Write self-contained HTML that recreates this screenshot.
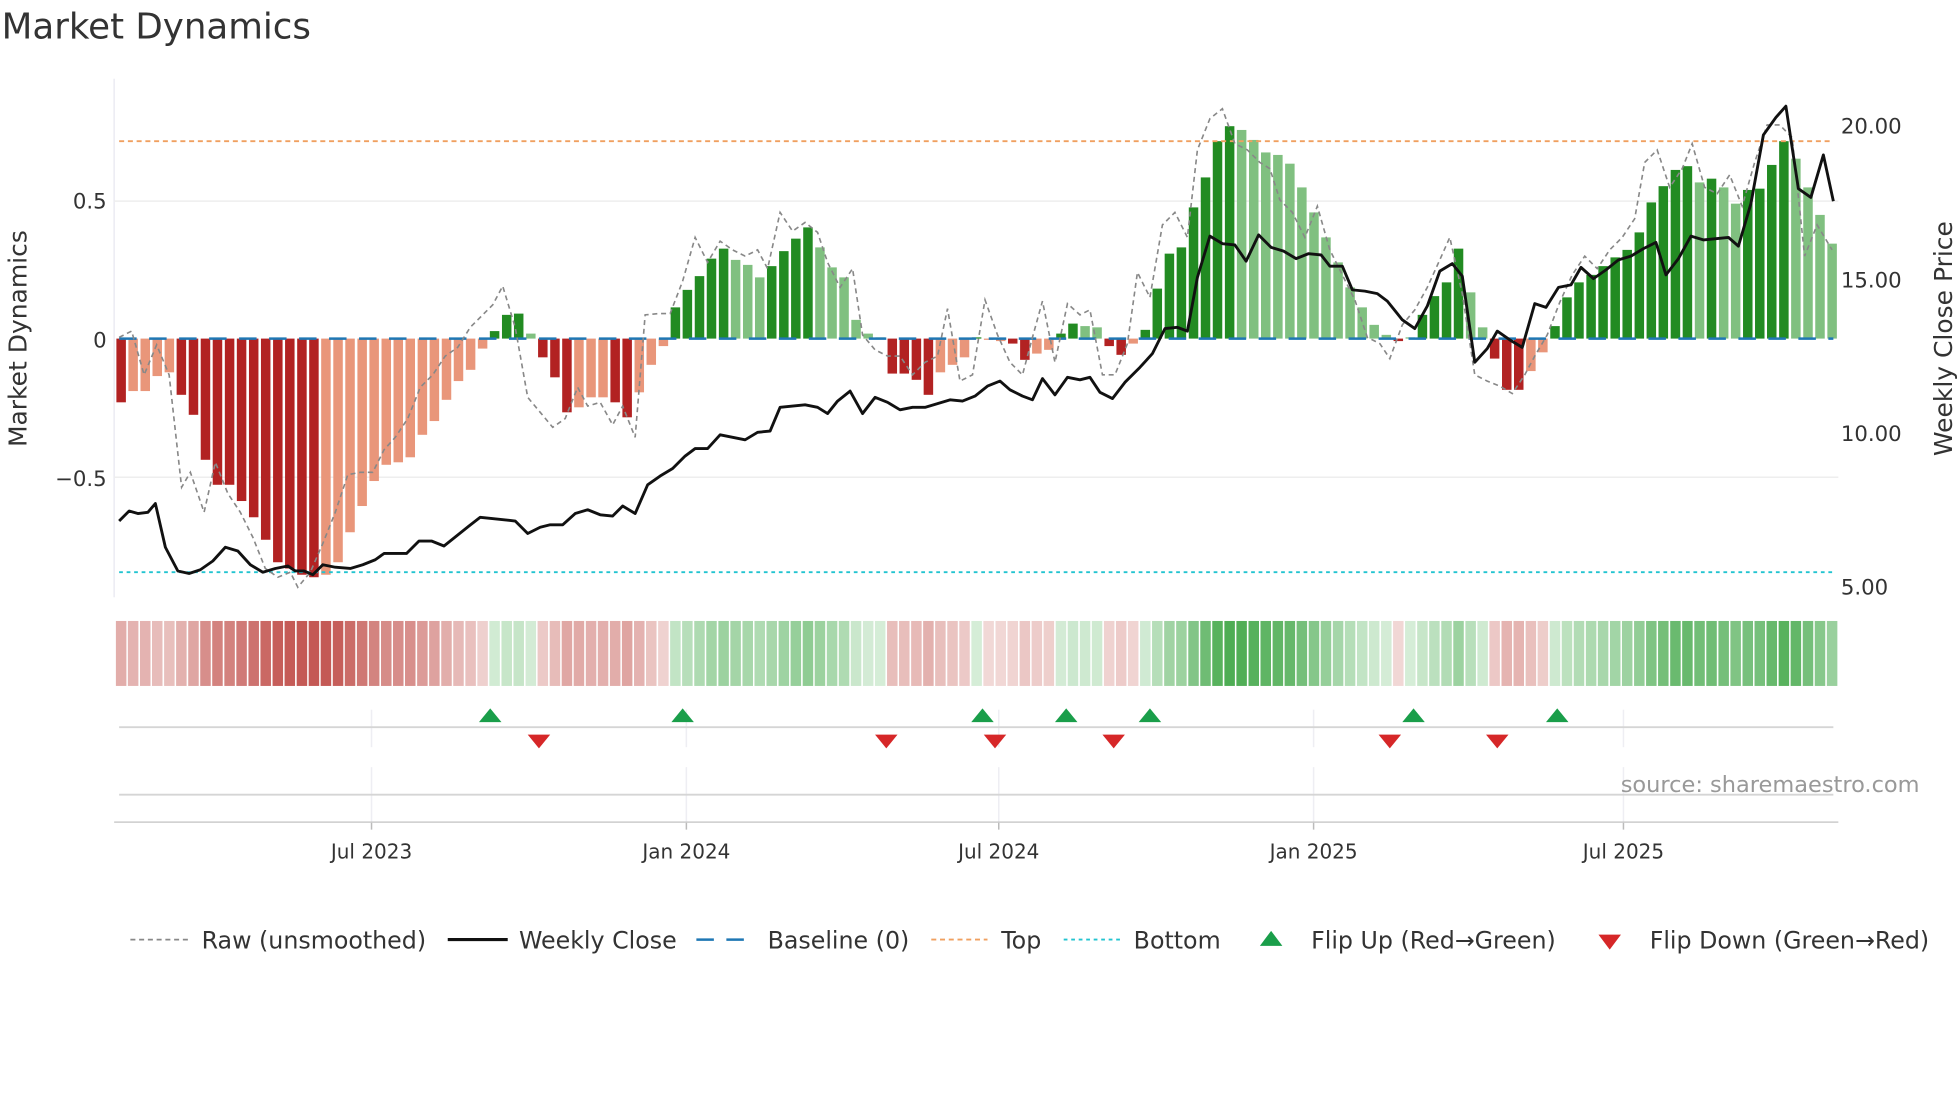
<!DOCTYPE html>
<html><head><meta charset="utf-8"><style>
html,body{margin:0;padding:0;background:#fff;}
svg{display:block;font-family:"DejaVu Sans","Liberation Sans",sans-serif;}
</style></head><body>
<svg id="s" width="1960" height="1102" viewBox="0 0 1568 882" xmlns="http://www.w3.org/2000/svg">
<rect width="1568" height="882" fill="#fff"/>
<text x="1" y="31" font-size="28.5" fill="#333">Market Dynamics</text>
<line x1="91" y1="63" x2="91" y2="478" stroke="#ebebf2" stroke-width="1.2"/>
<line x1="91" y1="161" x2="1471" y2="161" stroke="#eeeeee" stroke-width="1.2"/>
<line x1="91" y1="382" x2="1471" y2="382" stroke="#eeeeee" stroke-width="1.2"/>
<g id="bars"></g>
<line x1="95" y1="113" x2="1467" y2="113" stroke="#f0a060" stroke-width="1.5" stroke-dasharray="4,3"/>
<line x1="95" y1="458" x2="1467" y2="458" stroke="#22c4d0" stroke-width="1.5" stroke-dasharray="3,3"/>
<line x1="95" y1="271" x2="1467" y2="271" stroke="#1f77b4" stroke-width="2" stroke-dasharray="14,10"/>
<polyline id="raw" fill="none" stroke="#888" stroke-width="1.3" stroke-dasharray="4,3"/>
<polyline id="px" fill="none" stroke="#111" stroke-width="2.3" stroke-linejoin="round"/>
<g font-size="17" fill="#333">
<text x="85" y="167" text-anchor="end">0.5</text>
<text x="85" y="278" text-anchor="end">0</text>
<text x="85" y="389" text-anchor="end">−0.5</text>
<text x="1473" y="107">20.00</text>
<text x="1473" y="230">15.00</text>
<text x="1473" y="353">10.00</text>
<text x="1473" y="476">5.00</text>
<text transform="translate(21,271) rotate(-90)" text-anchor="middle" font-size="20">Market Dynamics</text>
<text transform="translate(1562,271) rotate(-90)" text-anchor="middle" font-size="20">Weekly Close Price</text>
</g>
<g id="heat"></g>
<g id="grid"></g>
<line x1="95" y1="582" x2="1467" y2="582" stroke="#d5d5d5" stroke-width="1.5"/>
<line x1="95" y1="636" x2="1467" y2="636" stroke="#d5d5d5" stroke-width="1.5"/>
<line x1="91" y1="658" x2="1471" y2="658" stroke="#cccccc" stroke-width="1.2"/>
<g id="flips"></g>
<text x="1536" y="634" text-anchor="end" font-size="18" fill="#999">source: sharemaestro.com</text>
<g font-size="16" fill="#333" text-anchor="middle">
<text x="297" y="687">Jul 2023</text><text x="549" y="687">Jan 2024</text><text x="799" y="687">Jul 2024</text><text x="1051" y="687">Jan 2025</text><text x="1299" y="687">Jul 2025</text>
</g>
<g font-size="19" fill="#333">
<line x1="104" y1="752" x2="150" y2="752" stroke="#888" stroke-width="1.4" stroke-dasharray="4,3"/>
<text x="161" y="759">Raw (unsmoothed)</text>
<line x1="358" y1="752" x2="406" y2="752" stroke="#111" stroke-width="2.5"/>
<text x="415" y="759">Weekly Close</text>
<line x1="557" y1="752" x2="603" y2="752" stroke="#1f77b4" stroke-width="2" stroke-dasharray="14,10"/>
<text x="614" y="759">Baseline (0)</text>
<line x1="745" y1="752" x2="790" y2="752" stroke="#f0a060" stroke-width="1.5" stroke-dasharray="4,3"/>
<text x="801" y="759">Top</text>
<line x1="851" y1="752" x2="896" y2="752" stroke="#22c4d0" stroke-width="1.5" stroke-dasharray="3,3"/>
<text x="907" y="759">Bottom</text>
<polygon points="1008,757 1026,757 1017,745" fill="#1a9e4a"/>
<text x="1049" y="759">Flip Up (Red→Green)</text>
<polygon points="1279,748 1297,748 1288,760" fill="#d62728"/>
<text x="1320" y="759">Flip Down (Green→Red)</text>
</g>
</svg>
<script>
(function(){
var NS="http://www.w3.org/2000/svg";
function el(p,t,a){var e=document.createElementNS(NS,t);for(var k in a)e.setAttribute(k,a[k]);p.appendChild(e);return e;}
var raw=[[95,270],[105,265],[115,300],[125,276],[135,300],[145,390],[152,378],[163,410],[172,370],[182,395],[192,410],[202,430],[212,455],[222,462],[232,458],[238,470],[248,458],[258,435],[268,410],[278,380],[288,378],[298,378],[307,360],[316,350],[326,335],[336,310],[346,300],[356,285],[366,278],[376,262],[386,252],[394,244],[402,229],[412,262],[422,318],[432,330],[442,342],[452,335],[462,310],[470,325],[480,322],[490,340],[498,325],[508,350],[516,252],[526,251],[536,251],[546,225],[556,190],[566,210],[576,193],[586,200],[596,205],[606,200],[614,215],[624,170],[634,185],[644,178],[654,186],[662,210],[672,230],[682,215],[690,268],[700,280],[710,285],[720,285],[730,300],[740,290],[750,285],[758,247],[768,305],[778,300],[788,240],[798,268],[808,290],[818,300],[826,270],[834,241],[844,290],[854,243],[864,252],[872,248],[882,300],[892,300],[902,275],[910,218],[920,238],[930,180],[940,170],[950,190],[958,120],[968,95],[978,87],[988,115],[998,120],[1008,130],[1016,135],[1024,160],[1034,170],[1044,190],[1054,165],[1064,200],[1074,220],[1084,240],[1094,270],[1104,275],[1112,287],[1122,260],[1132,248],[1142,230],[1152,208],[1160,190],[1170,235],[1180,300],[1190,305],[1200,309],[1210,315],[1220,300],[1228,285],[1238,268],[1248,242],[1258,220],[1268,205],[1278,215],[1288,200],[1298,190],[1308,175],[1316,130],[1326,120],[1336,150],[1346,135],[1354,115],[1364,150],[1374,155],[1384,140],[1394,165],[1404,130],[1414,100],[1424,100],[1434,110],[1444,205],[1454,180],[1466,200]];
var px=[[95,417],[103,409],[110,411],[118,410],[124,403],[132,438],[142,457],[151,459],[160,456],[170,449],[180,438],[190,441],[200,452],[210,458],[220,455],[230,453],[236,457],[243,457],[250,460],[258,452],[268,454],[280,455],[290,452],[300,448],[307,443],[325,443],[335,433],[345,433],[355,437],[365,429],[375,421],[384,414],[412,417],[422,427],[432,422],[440,420],[450,420],[460,411],[470,408],[480,412],[490,413],[498,405],[508,411],[518,388],[528,381],[538,375],[548,365],[556,359],[566,359],[576,348],[586,350],[596,352],[606,346],[616,345],[624,326],[634,325],[644,324],[654,326],[662,331],[670,321],[680,313],[690,331],[700,318],[710,322],[720,328],[730,326],[740,326],[750,323],[760,320],[770,321],[780,317],[790,309],[800,305],[808,312],[818,317],[826,320],[834,303],[844,316],[854,302],[864,304],[872,302],[880,314],[890,319],[900,306],[912,294],[922,283],[932,263],[942,262],[950,265],[958,222],[968,189],[978,195],[988,196],[997,209],[1007,188],[1017,198],[1027,201],[1037,207],[1047,203],[1057,204],[1064,213],[1074,213],[1082,232],[1092,233],[1102,235],[1110,241],[1122,256],[1132,263],[1142,245],[1152,217],[1162,211],[1170,221],[1180,290],[1190,279],[1198,265],[1208,272],[1218,278],[1228,243],[1237,246],[1247,230],[1257,228],[1265,214],[1275,223],[1285,216],[1295,208],[1305,205],[1315,199],[1325,194],[1333,220],[1343,207],[1353,189],[1363,192],[1373,191],[1383,190],[1391,197],[1401,163],[1411,108],[1421,94],[1429,85],[1439,151],[1449,158],[1459,124],[1467,161]];
document.getElementById('raw').setAttribute('points',raw.map(function(p){return p.join(',')}).join(' '));
document.getElementById('px').setAttribute('points',px.map(function(p){return p.join(',')}).join(' '));
var B=[[322,'d'],[313,'l'],[313,'l'],[301,'l'],[298,'l'],[316,'d'],[332,'d'],[368,'d'],[388,'d'],[388,'d'],[401,'d'],[414,'d'],[432,'d'],[450,'d'],[455,'d'],[460,'d'],[462,'d'],[460,'l'],[450,'l'],[426,'l'],[405,'l'],[385,'l'],[372,'l'],[370,'l'],[366,'l'],[348,'l'],[337,'l'],[320,'l'],[305,'l'],[296,'l'],[279,'l'],[265,'d'],[252,'d'],[251,'d'],[267,'l'],[286,'d'],[302,'d'],[330,'d'],[326,'l'],[318,'l'],[318,'l'],[322,'d'],[334,'d'],[314,'l'],[292,'l'],[277,'l'],
[246,'d'],[232,'d'],[221,'d'],[207,'d'],[199,'d'],[208,'l'],[212,'l'],[222,'l'],[213,'d'],[201,'d'],[191,'d'],[182,'d'],[198,'l'],[214,'l'],[222,'l'],[256,'l'],[267,'l'],[270,'l'],
[299,'d'],[299,'d'],[304,'d'],[316,'d'],[298,'l'],[292,'l'],[286,'l'],[270,'d'],[272,'l'],[273,'l'],[275,'d'],[288,'d'],[283,'l'],[280,'l'],[267,'d'],[259,'d'],[261,'l'],[262,'l'],[277,'d'],[284,'d'],[275,'l'],
[264,'d'],[231,'d'],[203,'d'],[198,'d'],[166,'d'],[142,'d'],[113,'d'],[101,'d'],[104,'l'],[112,'l'],[122,'l'],[124,'l'],[131,'l'],[150,'l'],[170,'l'],[190,'l'],[210,'l'],[230,'l'],[246,'l'],[260,'l'],[268,'l'],[273,'d'],[270,'l'],
[252,'d'],[237,'d'],[226,'d'],[199,'d'],[234,'l'],[262,'l'],[287,'d'],[312,'d'],[312,'d'],[297,'l'],[282,'l'],
[261,'d'],[238,'d'],[226,'d'],[220,'d'],[213,'d'],[206,'d'],[200,'d'],[186,'d'],[162,'d'],[149,'d'],[136,'d'],[133,'d'],[146,'l'],[143,'d'],[150,'l'],[163,'l'],[152,'d'],[151,'d'],[132,'d'],[113,'d'],[127,'l'],[150,'l'],[172,'l'],[195,'l']];
var n=B.length, x0=92, x1=1471, step=(x1-x0)/n;
var bg=document.getElementById('bars'), hg=document.getElementById('heat');
function mix(a,b,t){return 'rgb('+[0,1,2].map(function(i){return Math.round(a[i]+(b[i]-a[i])*t)}).join(',')+')';}
for(var i=0;i<n;i++){
 var y=B[i][0],tp=B[i][1],x=x0+i*step;
 var neg=y>271;
 var c=neg?(tp=='d'?'#b22222':'#e9967a'):(tp=='d'?'#228b22':'#80c080');
 var ty=Math.min(y,271),h=Math.max(Math.abs(y-271),1);
 el(bg,'rect',{x:(x+0.8).toFixed(1),y:ty,width:(step-2).toFixed(1),height:h,fill:c});
 var v=Math.min(1,Math.abs(y-271)/190);
 var hc=neg?mix([242,218,216],[196,88,84],Math.pow(v,0.8)):mix([214,237,216],[76,172,82],Math.min(1,v*1.1));
 el(hg,'rect',{x:(x+0.4).toFixed(1),y:497,width:(step-1.2).toFixed(1),height:52,fill:hc});
}
var g=document.getElementById('grid');
[297,549,799,1051,1299].forEach(function(x){
 el(g,'line',{x1:x,y1:568,x2:x,y2:598,stroke:'#eeeef3','stroke-width':1.2});
 el(g,'line',{x1:x,y1:614,x2:x,y2:658,stroke:'#eeeef3','stroke-width':1.2});
 el(g,'line',{x1:x,y1:658,x2:x,y2:664,stroke:'#bbb','stroke-width':1.2});
});
var f=document.getElementById('flips');
[392,546,786,853,920,1131,1246].forEach(function(x){el(f,'polygon',{points:(x-9)+',578 '+(x+9)+',578 '+x+',567',fill:'#1a9e4a'});});
[431,709,796,891,1112,1198].forEach(function(x){el(f,'polygon',{points:(x-9)+',588 '+(x+9)+',588 '+x+',599',fill:'#d62728'});});
})();
</script>
</body></html>
